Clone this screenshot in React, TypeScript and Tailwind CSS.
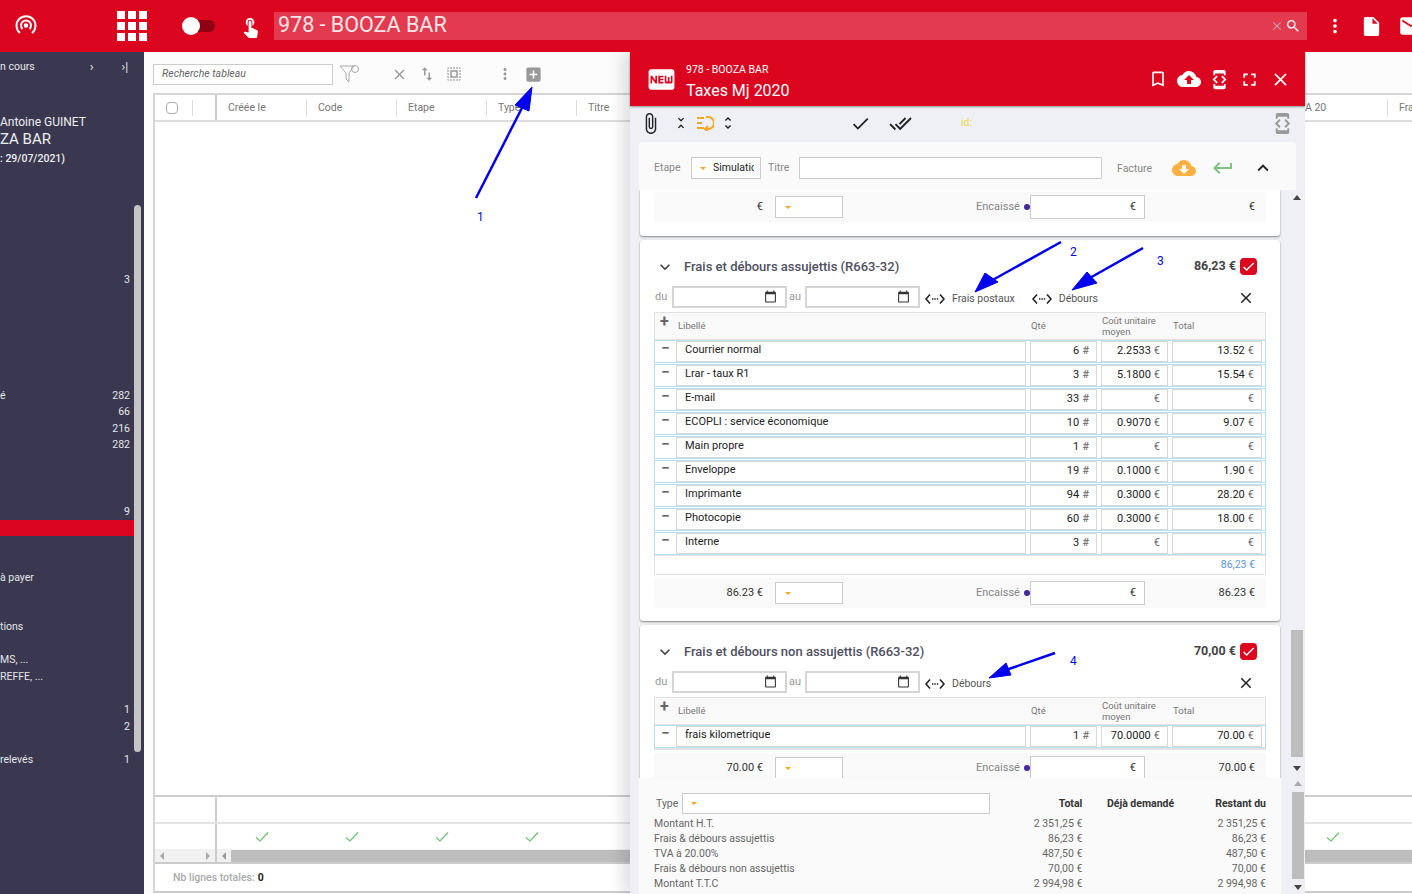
import {
  MdAddBox,
  MdAttachFile,
  MdBookmarkBorder,
  MdCalendarToday,
  MdCheck,
  MdClose,
  MdCloudDownload,
  MdCloudUpload,
  MdDeveloperMode,
  MdDoneAll,
  MdEmail,
  MdFiberNew,
  MdFullscreen,
  MdInsertDriveFile,
  MdKeyboardArrowDown,
  MdKeyboardArrowUp,
  MdKeyboardReturn,
  MdMoreVert,
  MdSearch,
  MdSelectAll,
  MdSwapVert,
  MdTouchApp,
  MdUnfoldLess,
  MdUnfoldMore,
} from "react-icons/md";

const sideRows: ([string, string] | null | "red")[] = [
  ["", "3"], null, null, null, null, null, null,
  ["é", "282"], ["", "66"], ["", "216"], ["", "282"], null, null, null,
  ["", "9"], "red", null, null,
  ["à payer", ""], null, null, ["tions", ""], null, ["MS, ...", ""], ["REFFE, ...", ""], null,
  ["", "1"], ["", "2"], null, ["relevés", "1"],
];

const columns = ["Créée le", "Code", "Etape", "Type", "Titre"];

const fraisRows = [
  ["Courrier normal", "6", "2.2533", "13.52"],
  ["Lrar - taux R1", "3", "5.1800", "15.54"],
  ["E-mail", "33", "", ""],
  ["ECOPLI : service économique", "10", "0.9070", "9.07"],
  ["Main propre", "1", "", ""],
  ["Enveloppe", "19", "0.1000", "1.90"],
  ["Imprimante", "94", "0.3000", "28.20"],
  ["Photocopie", "60", "0.3000", "18.00"],
  ["Interne", "3", "", ""],
];

const summary = [
  ["Montant H.T.", "2 351,25 €", "2 351,25 €"],
  ["Frais & débours assujettis", "86,23 €", "86,23 €"],
  ["TVA à 20.00%", "487,50 €", "487,50 €"],
  ["Frais & débours non assujettis", "70,00 €", "70,00 €"],
  ["Montant T.T.C", "2 994,98 €", "2 994,98 €"],
];

function Caret() {
  return <span className="block h-0 w-0 border-x-[3px] border-t-[3px] border-x-transparent border-t-[#f5a623]" />;
}

function ArrowUp({ color = "border-b-[#444]" }: { color?: string }) {
  return <span className={`block h-0 w-0 border-x-[4px] border-b-[5px] border-x-transparent ${color}`} />;
}

function ArrowDown() {
  return <span className="block h-0 w-0 border-x-[4px] border-t-[5px] border-x-transparent border-t-[#444]" />;
}

function Check() {
  return (
    <svg width="14" height="12" viewBox="0 0 14 12" fill="none" stroke="#6cc070" strokeWidth="1.2">
      <path d="M1 6.5 L5 10 L13 1.5" />
    </svg>
  );
}

function DateBox() {
  return (
    <div className="flex h-[22px] w-[115px] items-center justify-end border-2 border-[#d5d5d5] bg-white pb-[2px] pr-[8px]">
      <MdCalendarToday size={13} className="text-[#333]" />
    </div>
  );
}

function Ventilation({ label }: { label: string }) {
  return (
    <div className="mt-[3px] flex items-center text-[10.5px] text-[#555]">
      <svg width="20" height="12" viewBox="0 0 20 12" fill="none" stroke="#222" strokeWidth="1.6" className="mr-[7px]">
        <path d="M5 1.5 L1 6 L5 10.5 M15 1.5 L19 6 L15 10.5" />
        <path d="M7 6 H8.4 M9.4 6 H10.8 M11.8 6 H13.2" strokeWidth="1.5" />
      </svg>
      {label}
    </div>
  );
}

function Encaisse({ left, right }: { left: string; right: string }) {
  return (
    <div className="flex h-[30px] items-center rounded-sm bg-[#f9f9f9] text-[11px] text-[#333]">
      <span className="w-[109px] text-right">{left}</span>
      <div className="ml-[12px] flex h-[22px] w-[68px] items-center border border-[#ccc] bg-white pl-[9px]">
        <Caret />
      </div>
      <span className="ml-[133px] text-[#888]">Encaissé</span>
      <span className="ml-[4px] h-[6px] w-[6px] rounded-full bg-[#4527a0]" />
      <div className="flex h-[24px] w-[115px] items-center justify-end border border-[#ccc] bg-white pr-[8px]">€</div>
      <span className="flex-1 pr-[11px] text-right">{right}</span>
    </div>
  );
}

function LineRow({ row }: { row: string[] }) {
  return (
    <div className="flex h-[23px] items-stretch border border-[#b5dff3] text-[11px] text-[#222]">
      <div className="flex w-[21px] justify-center pt-[1px] text-[15px] font-bold leading-[12px] text-[#666]">−</div>
      <div className="w-[350px] border border-[#d8d8d8] bg-white pl-[8px] leading-[16px]">{row[0]}</div>
      <div className="ml-[4px] flex w-[67px] items-center justify-end border border-[#d8d8d8] bg-white pr-[7px]">
        {row[1]} <span className="ml-[3px] text-[#666]">#</span>
      </div>
      <div className="ml-[4px] flex w-[67px] items-center justify-end border border-[#d8d8d8] bg-white pr-[7px]">
        {row[2]} <span className="ml-[3px] text-[#666]">€</span>
      </div>
      <div className="ml-[4px] flex w-[90px] items-center justify-end border border-[#d8d8d8] bg-white pr-[7px]">
        {row[3]} <span className="ml-[3px] text-[#666]">€</span>
      </div>
    </div>
  );
}

function Section({
  title,
  amount,
  ventilations,
  rows,
  footer,
  children,
}: {
  title: string;
  amount: string;
  ventilations: string[];
  rows: string[][];
  footer: string;
  children?: React.ReactNode;
}) {
  return (
    <div className="mb-px mt-[4px] rounded-[3px] bg-white px-[14px] pb-[13px] pt-[16px] shadow-[0_1px_2px_rgba(0,0,0,0.45)]">
      <div className="flex h-[21px] items-center">
        <MdKeyboardArrowDown size={20} className="ml-[1px] text-[#444]" />
        <span className="ml-[9px] text-[13px] font-medium text-[#50505f]">{title}</span>
        <span className="ml-auto mr-[4px] text-[12.5px] font-bold text-[#444]">{amount}</span>
        <span className="mr-[9px] flex h-[17px] w-[17px] items-center justify-center rounded-sm bg-[#db051f]">
          <MdCheck size={15} className="text-white" />
        </span>
      </div>
      <div className="mt-[9px] flex h-[22px] items-center text-[11px] text-[#999]">
        <span className="mr-[5px] ml-px w-[12px]">du</span>
        <DateBox />
        <span className="mx-[2px] w-[14px]">au</span>
        <DateBox />
        <div className="ml-[5px] flex gap-[17px]">
          {ventilations.map((v) => (
            <Ventilation key={v} label={v} />
          ))}
        </div>
        <MdClose size={18} className="ml-auto mr-[11px] mt-[2px] text-[#222]" />
      </div>
      <div className="mt-[4px] flex h-[28px] border border-[#e3e3e3] bg-[#f9f9f9] text-[9.5px] text-[#777]">
        <span className="w-[23px] pl-[5px] text-[16px] font-bold leading-[18px] text-[#666]">+</span>
        <span className="w-[353px] self-center pt-[1px]">Libellé</span>
        <span className="w-[71px] self-center">Qté</span>
        <span className="w-[71px] self-center leading-[11px]">Coût unitaire moyen</span>
        <span className="self-center">Total</span>
      </div>
      <div className="flex flex-col gap-[1px]">
        {rows.map((r) => (
          <LineRow key={r[0]} row={r} />
        ))}
      </div>
      {children}
      <div className="mt-[3px]">
        <Encaisse left={footer} right={footer} />
      </div>
    </div>
  );
}

function SideBar() {
  return (
    <div className="relative w-[144px] shrink-0 bg-[#393850] text-white">
      <div className="flex h-[30px] items-center text-[10.5px] text-[#e6e6e6]">
        <span>n cours</span>
        <span className="ml-[55px] text-[13px]">›</span>
        <span className="ml-[28px] text-[12px]">›|</span>
      </div>
      <div className="mt-[34px] leading-none">
        <div className="h-[15px] text-[12px] text-[#eee]">Antoine GUINET</div>
        <div className="mt-[1px] h-[20px] text-[15px] text-[#eee]">ZA BAR</div>
        <div className="mt-[2px] text-[10.5px] font-medium text-[#eee]">: 29/07/2021)</div>
      </div>
      <div className="mt-[107px] w-[134px] text-[10.5px] text-[#e6e6e6]">
        {sideRows.map((row, i) =>
          row === "red" ? (
            <div key={i} className="h-[16.55px] bg-[#db051f]" />
          ) : (
            <div key={i} className="flex h-[16.55px] items-center justify-between pr-[4px]">
              <span>{row?.[0]}</span>
              <span>{row?.[1]}</span>
            </div>
          ),
        )}
      </div>
      <div className="absolute left-[134px] top-[153px] h-[547px] w-[7px] rounded bg-[#c4c4c4]" />
    </div>
  );
}

function MainTable() {
  return (
    <div className="min-w-0 flex-1 overflow-hidden bg-[#fcfcfc] pl-[9px]">
      <div className="flex h-[41px] items-center pt-[3px] text-[#999]">
        <div className="flex h-[21px] w-[180px] items-center border border-[#ccc] bg-white pl-[8px] text-[10.5px] italic text-[#666]">
          Recherche tableau
        </div>
        <svg width="22" height="20" viewBox="0 0 22 20" fill="none" stroke="#aaa" className="ml-[6px]">
          <path d="M1 2 H15 L10 9 V18 L7 15 V9 Z" />
          <circle cx="16" cy="5" r="3.5" />
        </svg>
        <MdClose size={17} className="ml-[30px]" />
        <MdSwapVert size={18} className="ml-[10px]" />
        <MdSelectAll size={18} className="ml-[9px]" />
        <MdMoreVert size={18} className="ml-[33px]" />
        <MdAddBox size={19} className="ml-[10px]" />
      </div>
      <div className="flex h-[800px] w-[1300px] flex-col border-2 border-r-0 border-[#d5d5d5] border-b-[#ccc] bg-white">
        <div className="flex h-[27px] shrink-0 items-center border-b-2 border-[#ddd] text-[10.5px] text-[#777]">
          <div className="flex h-full w-[62px] shrink-0 items-center border-r-2 border-[#ccc] pl-[11px]">
            <span className="h-[12px] w-[12px] rounded-sm border border-[#aaa] bg-white" />
            <span className="ml-[14px] h-[16px] w-px bg-[#ddd]" />
          </div>
          {columns.map((c) => (
            <div key={c} className="flex h-[16px] w-[90px] shrink-0 items-center border-r border-[#ddd] pl-[11px]">
              {c}
            </div>
          ))}
          <div className="w-[621px] shrink-0" />
          <div className="flex h-[16px] w-[100px] shrink-0 items-center border-r border-[#ddd] pl-[17px]">A 20</div>
          <div className="pl-[11px]">Fra</div>
        </div>
        <div className="flex-1" />
        <div className="flex h-[27px] border-t-2 border-[#ccc]">
          <div className="w-[62px] border-r-2 border-[#ccc]" />
        </div>
        <div className="flex h-[27px] items-center border-t-2 border-[#e4e4e4]">
          <div className="h-full w-[62px] shrink-0 border-r-2 border-[#ccc]" />
          {columns.slice(0, 4).map((c) => (
            <div key={c} className="flex w-[90px] shrink-0 justify-center">
              <Check />
            </div>
          ))}
          <div className="ml-[749px]">
            <Check />
          </div>
        </div>
        <div className="flex h-[15px] items-center border-b-2 border-[#ccc] bg-[#f1f1f1]">
          <div className="flex h-full w-[62px] items-center justify-between border-r-2 border-[#ccc] px-[5px]">
            <span className="h-0 w-0 border-y-[4px] border-r-[4px] border-y-transparent border-r-[#aaa]" />
            <span className="h-0 w-0 border-y-[4px] border-l-[4px] border-y-transparent border-l-[#aaa]" />
          </div>
          <span className="ml-[5px] h-0 w-0 border-y-[4px] border-r-[4px] border-y-transparent border-r-[#999]" />
          <div className="ml-[5px] h-[12px] flex-1 bg-[#bdbdbd]" />
        </div>
        <div className="flex h-[27px] items-center pl-[18px] text-[10.5px] font-medium text-[#aaa]">
          Nb lignes totales:<b className="ml-[3px] text-[#222]">0</b>
        </div>
      </div>
    </div>
  );
}

function ReturnList() {
  return (
    <svg width="18" height="16" viewBox="0 0 18 16" fill="none" stroke="#f5a623" strokeWidth="2">
      <path d="M1 3 H8 M1 8 H6 M1 13 H8 M10 2 H12 A6 6 0 0 1 12 14 H10 M12 11 L9 14 L12 16" />
    </svg>
  );
}

function Modal() {
  return (
    <div className="absolute bottom-0 left-[630px] top-[52px] flex w-[675px] flex-col bg-[#eef0f5] shadow-[-8px_0_14px_rgba(0,0,0,0.12)]">
      <div className="z-10 flex h-[54px] shrink-0 items-center bg-[#db051f] pl-[19px] pr-[14px] text-white shadow-[0_1px_2px_rgba(0,0,0,0.4)]">
        <MdFiberNew size={31} className="-ml-[3px]" />
        <div className="ml-[9px] pt-[5px]">
          <div className="text-[10.5px] leading-[14px]">978 - BOOZA BAR</div>
          <div className="mt-[4px] text-[16px] leading-[19px]">Taxes Mj 2020</div>
        </div>
        <div className="ml-auto flex items-center gap-[10px]">
          <MdBookmarkBorder size={20} />
          <MdCloudUpload size={24} className="-ml-px" />
          <MdDeveloperMode size={21} className="-ml-[2px]" />
          <MdFullscreen size={21} className="-ml-px" />
          <MdClose size={21} />
        </div>
      </div>
      <div className="flex h-[36px] shrink-0 items-center pb-[2px] pl-[9px] text-[#222]">
        <MdAttachFile size={23} />
        <MdUnfoldLess size={16} className="ml-[11px]" />
        <span className="ml-[7px]">
          <ReturnList />
        </span>
        <MdUnfoldMore size={16} className="ml-[6px]" />
        <MdCheck size={21} className="ml-[114px]" />
        <MdDoneAll size={23} className="ml-[18px]" />
        <span className="ml-[49px] text-[10.5px] text-[#f5d742]">id:</span>
        <MdDeveloperMode size={23} className="ml-auto mr-[11px] text-[#999]" />
      </div>
      <div className="ml-[9px] flex h-[48px] w-[657px] shrink-0 items-center rounded-t-sm bg-[#fafafa] pl-[15px] pt-[4px] text-[10.5px] text-[#888]">
        <span className="w-[37px]">Etape</span>
        <div className="flex h-[22px] w-[70px] items-center overflow-hidden whitespace-nowrap border border-[#ccc] bg-white pl-[8px] text-[#222]">
          <Caret />
          <span className="ml-[7px] w-[41px] overflow-hidden">Simulatic</span>
        </div>
        <span className="ml-[7px] w-[31px]">Titre</span>
        <div className="h-[22px] w-[303px] border border-[#ccc] bg-white" />
        <span className="ml-[15px] mt-[1px]">Facture</span>
        <MdCloudDownload size={24} className="ml-[20px] text-[#fbb040]" />
        <MdKeyboardReturn size={24} className="ml-[15px] text-[#7cc47f]" />
        <MdKeyboardArrowUp size={22} className="ml-[17px] text-[#222]" />
      </div>
      <div className="flex h-[588px] shrink-0 overflow-hidden">
        <div className="ml-[10px] w-[640px] shrink-0">
          <div className="rounded-b-[3px] bg-white px-[14px] pb-[14px] pt-[2px] shadow-[0_1px_2px_rgba(0,0,0,0.45)]">
            <Encaisse left="€" right="€" />
          </div>
          <Section
            title="Frais et débours assujettis (R663-32)"
            amount="86,23 €"
            ventilations={["Frais postaux", "Débours"]}
            rows={fraisRows}
            footer="86.23 €"
          >
            <div className="flex h-[20px] items-center justify-end border border-[#e3e3e3] pr-[10px] text-[10.5px] text-[#5b96dd]">
              86,23 €
            </div>
          </Section>
          <Section
            title="Frais et débours non assujettis (R663-32)"
            amount="70,00 €"
            ventilations={["Débours"]}
            rows={[["frais kilometrique", "1", "70.0000", "70.00"]]}
            footer="70.00 €"
          >
            <div className="h-[2px] border border-[#e3e3e3]" />
          </Section>
        </div>
        <div className="ml-[11px] flex w-[12px] flex-col items-center">
          <span className="mt-[5px]">
            <ArrowUp />
          </span>
          <div className="mt-[430px] h-[127px] w-[12px] bg-[#bdbdbd]" />
          <span className="mt-[9px]">
            <ArrowDown />
          </span>
        </div>
      </div>
      <div className="flex min-h-0 flex-1 overflow-hidden">
        <div className="ml-[9px] w-[642px] shrink-0 bg-[#fafafa] px-[15px] pt-[15px] text-[10.5px] text-[#666]">
          <div className="flex h-[21px] items-center">
            <span className="ml-[2px] w-[26px]">Type</span>
            <div className="flex h-[21px] w-[309px] items-center border border-[#ccc] bg-white pl-[8px]">
              <Caret />
            </div>
            <b className="w-[92px] text-right font-bold text-[#333]">Total</b>
            <b className="w-[92px] text-right font-bold text-[#333]">Déjà demandé</b>
            <b className="w-[92px] text-right font-bold text-[#333]">Restant du</b>
          </div>
          <div className="mt-[2px]">
            {summary.map((s) => (
              <div key={s[0]} className="flex h-[15px] items-center">
                <span className="w-[337px]">{s[0]}</span>
                <span className="w-[92px] text-right">{s[1]}</span>
                <span className="w-[184px] text-right">{s[2]}</span>
              </div>
            ))}
          </div>
        </div>
        <div className="ml-[11px] flex w-[12px] flex-col items-center">
          <span className="mt-[3px]">
            <ArrowUp color="border-b-[#aaa]" />
          </span>
          <div className="mt-[6px] h-[87px] w-[12px] bg-[#bdbdbd]" />
          <span className="mt-[6px]">
            <ArrowDown />
          </span>
        </div>
      </div>
    </div>
  );
}

function Arrows() {
  return (
    <svg width="1412" height="894" className="pointer-events-none absolute left-0 top-0" fill="#0000f0" stroke="#0000f0">
      <path d="M476 198 L524 104" strokeWidth="2.5" />
      <path d="M532 87 L515 105 L529 111 Z" />
      <path d="M1061 242 L989 282" strokeWidth="2.5" />
      <path d="M975 292 L985 273 L998 282 Z" />
      <path d="M1143 248 L1088 279" strokeWidth="2.5" />
      <path d="M1072 290 L1087 272 L1097 283 Z" />
      <path d="M1055 653 L1006 670" strokeWidth="2.5" />
      <path d="M989 678 L1006 663 L1011 675 Z" />
      <g stroke="none" fontSize="12" fontFamily="Roboto, sans-serif">
        <text x="477" y="221">1</text>
        <text x="1070" y="256">2</text>
        <text x="1157" y="265">3</text>
        <text x="1070" y="665">4</text>
      </g>
    </svg>
  );
}

export default function App() {
  return (
    <div className="relative h-[894px] w-[1412px] overflow-hidden bg-[#fafafa] [font-family:Roboto,sans-serif]">
      <div className="relative z-20 flex h-[52px] items-center bg-[#db051f] text-white">
        <svg width="22" height="22" viewBox="0 0 22 22" fill="none" stroke="white" strokeWidth="2" className="ml-[15px] shrink-0">
          <path d="M5 18 A9.5 9.5 0 1 1 17 18" />
          <path d="M7.5 14 A5 5 0 1 1 14.5 14" />
          <circle cx="11" cy="10.5" r="1.3" fill="white" />
        </svg>
        <div className="ml-[80px] grid shrink-0 grid-cols-3 gap-[3px]">
          {[...Array(9)].map((_, i) => (
            <span key={i} className="h-[8px] w-[8px] bg-white" />
          ))}
        </div>
        <div className="relative ml-[35px] h-[12px] w-[33px] shrink-0">
          <span className="absolute right-0 h-[12px] w-[24px] rounded-full bg-[#8e0012]" />
          <span className="absolute -top-[3px] left-0 h-[18px] w-[18px] rounded-full bg-white" />
        </div>
        <MdTouchApp size={23} className="ml-[24px] shrink-0" />
        <div className="ml-[12px] flex h-[28px] w-[1033px] shrink-0 items-center bg-[#e33a4f] pl-[4px] pr-[6px] text-[21.5px]">
          <span className="pb-[2px] text-[#f8e6e8]">978 - BOOZA BAR</span>
          <MdClose size={14} className="ml-auto text-[#c9a0a6]" />
          <MdSearch size={16} className="ml-[1px]" />
        </div>
        <MdMoreVert size={22} className="ml-[17px] shrink-0" />
        <MdInsertDriveFile size={23} className="ml-[14px] shrink-0" />
        <MdEmail size={26} className="ml-[15px] shrink-0" />
      </div>
      <div className="flex h-[842px]">
        <SideBar />
        <MainTable />
      </div>
      <Modal />
      <Arrows />
    </div>
  );
}
